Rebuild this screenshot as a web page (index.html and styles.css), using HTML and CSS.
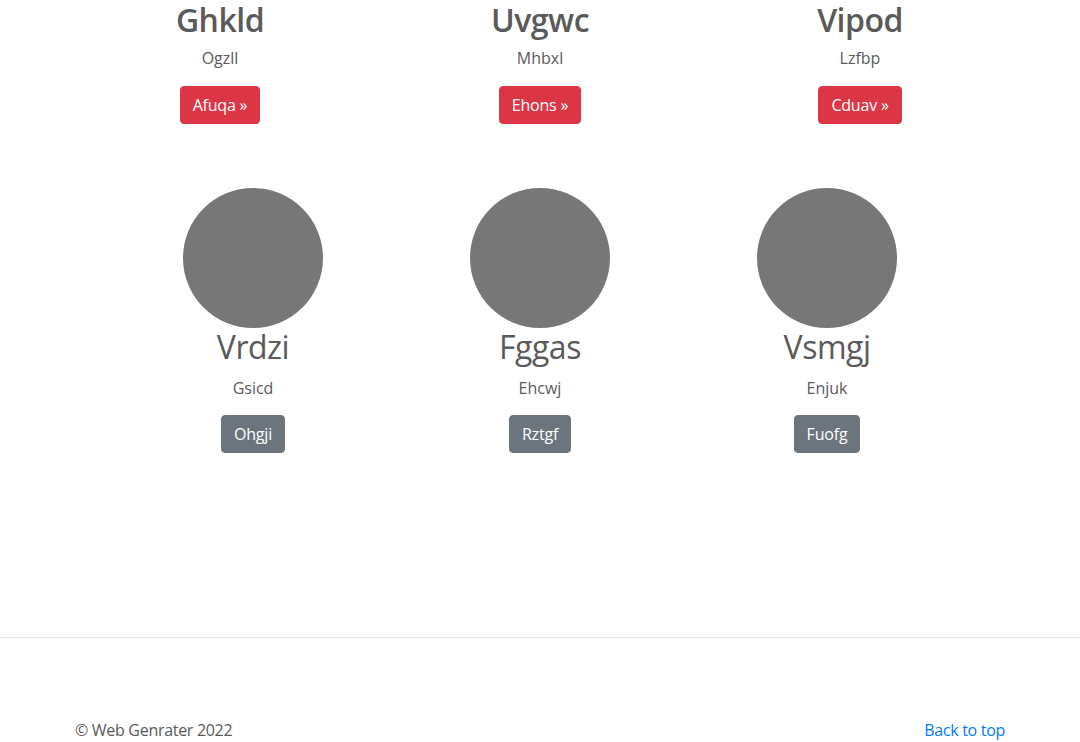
FILE: index.html
```html
<!DOCTYPE html>
<html lang="en">
<head>
<meta charset="utf-8">
<title>Marketing</title>
<link rel="stylesheet" href="styles.css">
</head>
<body>
<main class="page">
  <section class="row row-top">
    <div class="col">
      <h2 class="title title-bold">Ghkld</h2>
      <p class="sub">Ogzll</p>
      <a class="btn btn-danger" href="#">Afuqa &raquo;</a>
    </div>
    <div class="col">
      <h2 class="title title-bold">Uvgwc</h2>
      <p class="sub">Mhbxl</p>
      <a class="btn btn-danger" href="#">Ehons &raquo;</a>
    </div>
    <div class="col">
      <h2 class="title title-bold">Vipod</h2>
      <p class="sub">Lzfbp</p>
      <a class="btn btn-danger" href="#">Cduav &raquo;</a>
    </div>
  </section>

  <section class="row row-team">
    <div class="col">
      <div class="avatar"></div>
      <h2 class="title">Vrdzi</h2>
      <p class="sub">Gsicd</p>
      <a class="btn btn-secondary" href="#">Ohgji</a>
    </div>
    <div class="col">
      <div class="avatar"></div>
      <h2 class="title">Fggas</h2>
      <p class="sub">Ehcwj</p>
      <a class="btn btn-secondary" href="#">Rztgf</a>
    </div>
    <div class="col">
      <div class="avatar"></div>
      <h2 class="title">Vsmgj</h2>
      <p class="sub">Enjuk</p>
      <a class="btn btn-secondary" href="#">Fuofg</a>
    </div>
  </section>
</main>
<hr class="divider">
<footer class="footer">
  <p class="copy">&copy; Web Genrater 2022</p>
  <a class="back" href="#">Back to top</a>
</footer>
</body>
</html>
```

FILE: styles.css
```css
* { box-sizing: border-box; }
html, body { margin: 0; padding: 0; }
body {
  font-family: "Open Sans", "Noto Sans", "Liberation Sans", sans-serif;
  font-size: 16px;
  line-height: 1.5;
  color: #5a5a5a;
  background: #fff;
}
.page { height: 637px; }
.row {
  display: grid;
  grid-template-columns: repeat(3, 1fr);
  margin: 0 auto;
}
.row-top { width: 960px; padding-top: 1px; }
.row-team { width: 861px; margin-top: 64px; }
.col { text-align: center; display: flex; flex-direction: column; align-items: center; }
.title {
  font-size: 32px;
  line-height: 1.2;
  font-weight: 400;
  letter-spacing: -0.5px;
  margin: 0 0 7px;
}
.title-bold { font-weight: 600; }
.row-team .title { margin: 0 0 9px; }
.sub { margin: 0 0 16px; }
.row-team .sub { margin-bottom: 15px; }
.btn {
  display: inline-block;
  padding: 6px 12px;
  font-size: 16px;
  line-height: 24px;
  letter-spacing: -0.2px;
  border: 1px solid transparent;
  border-radius: 4px;
  color: #fff;
  text-decoration: none;
}
.btn-danger { background: #dc3545; border-color: #dc3545; }
.btn-secondary { background: #6c757d; border-color: #6c757d; }
.avatar {
  width: 140px;
  height: 140px;
  border-radius: 50%;
  background: #777;
}
.divider {
  margin: 0;
  border: 0;
  border-top: 1px solid #e5e5e5;
}
.footer {
  width: 960px;
  margin: 0 auto;
  padding: 80px 15px 0;
  display: flex;
  justify-content: space-between;
  letter-spacing: -0.3px;
}
.copy { margin: 0; }
.back { color: #007bff; text-decoration: none; }
```
